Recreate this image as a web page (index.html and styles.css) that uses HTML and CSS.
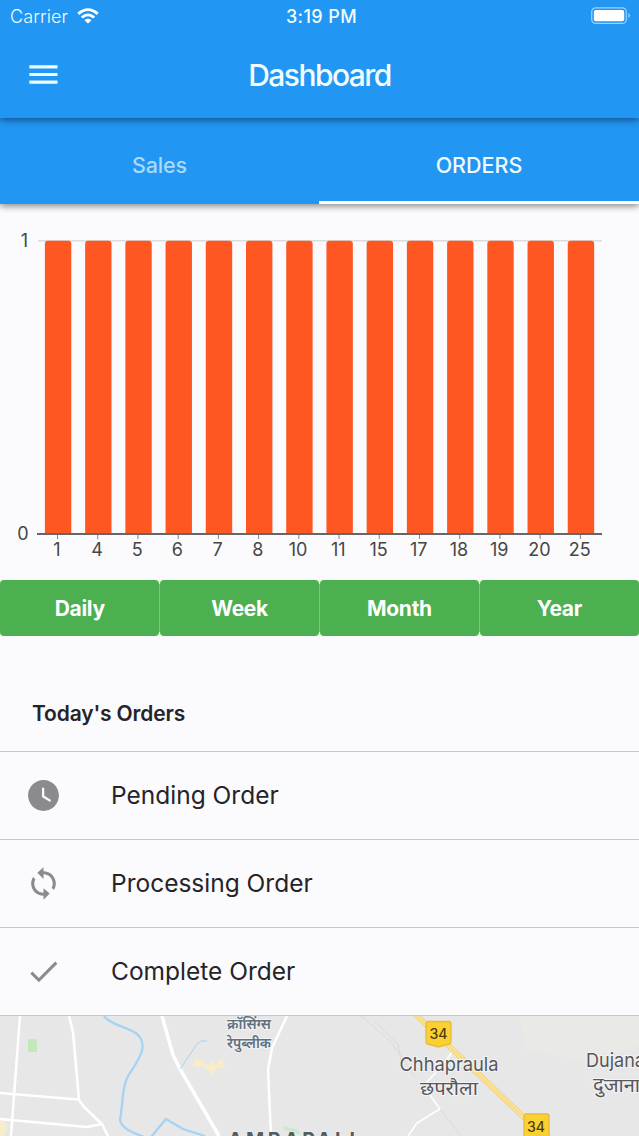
FILE: index.html
```html
<!DOCTYPE html>
<html lang="en">
<head>
<meta charset="utf-8">
<title>Dashboard</title>
<link rel="stylesheet" href="styles.css">
</head>
<body>
<main class="screen">
  <header class="header">
    <div class="status">
      <div class="carrier"><span class="carrier-name">Carrier</span>
        <svg class="wifi" width="22" height="16" viewBox="0 0 22 16" fill="#fff"><path d="M11 15.600 7.500 12.200Q11 9.300 14.500 12.200Z"/><path d="M5.900 10.600Q11 6.100 16.100 10.600L18.200 8.500Q11 2.300 3.800 8.500Z"/><path d="M2.300 7Q11-.8 19.700 7L21.800 4.800Q11-4.500.2 4.800Z"/></svg>
      </div>
      <span class="time">3:19 PM</span>
      <svg class="battery" width="40" height="18" viewBox="0 0 40 18"><rect x=".7" y=".8" width="34.6" height="15.6" rx="4" fill="none" stroke="#9bd0fb" stroke-width="1.2"/><rect x="2.8" y="2.9" width="30.4" height="11.4" rx="2" fill="#fff"/><path d="M37.3 5.8q3.6 2.8 0 5.6z" fill="#8ecafa"/></svg>
    </div>
    <div class="appbar">
      <svg class="menu" width="29" height="20" viewBox="0 0 29 20" fill="#effcff"><path d="M.3.3h28.2v3.1H.3zM.3 8h28.2v3.1H.3zM.3 15.6h28.2v3.1H.3z"/></svg>
      <h1 class="title">Dashboard</h1>
    </div>
  </header>
  <nav class="tabs">
    <div class="tab">Sales</div>
    <div class="tab tab-active">ORDERS</div>
  </nav>
  <svg class="chart" width="639" height="376" viewBox="0 204 639 376">
    <path d="M38 240.800H602" stroke="#dcdcdc" stroke-width="1.4"/>
    <g class="bars" id="bars"></g>
    <path d="M37 534H602" stroke="#666" stroke-width="1.8"/>
    <g class="axis" id="axis"><text x="24.5" y="247">1</text><text x="23" y="540">0</text></g>
  </svg>
  <div class="ranges">
    <button class="range">Daily</button><button class="range">Week</button><button class="range">Month</button><button class="range">Year</button>
  </div>
  <section class="orders">
    <h2 class="orders-title">Today's Orders</h2>
    <div class="order"><svg class="icon" width="37" height="37" viewBox="0 0 24 24"><path d="M12 2C6.500 2 2 6.500 2 12s4.500 10 10 10 10-4.500 10-10S17.500 2 12 2zm4.200 14.200L11 13V7h1.500v5.200l4.500 2.700z"/></svg><span class="order-name">Pending Order</span></div>
    <div class="order"><svg class="icon" width="37" height="37" viewBox="0 0 24 24"><path d="M12 4V1.500L8 5l4 4V6c3.310 0 6 2.690 6 6 0 1.010-.25 1.970-.7 2.800l1.460 1.460C19.540 15.030 20 13.570 20 12c0-4.420-3.580-8-8-8zm0 14c-3.310 0-6-2.690-6-6 0-1.010.25-1.970.7-2.800L5.240 7.740C4.460 8.970 4 10.430 4 12c0 4.420 3.580 8 8 8v2.500l4-4-4-3.500z"/></svg><span class="order-name">Processing Order</span></div>
    <div class="order"><svg class="icon" width="37" height="37" viewBox="0 0 24 24"><path d="M9 16.170 4.830 12l-1.420 1.410L9 19 21 7l-1.410-1.410z"/></svg><span class="order-name">Complete Order</span></div>
  </section>
  <svg class="map" width="639" height="120" viewBox="0 1016 639 120">
    <rect y="1016" width="639" height="120" fill="#e7e7e8"/>
    <path d="M520 1016H639V1045L590 1062 525 1050Z" fill="#e9e9e6"/>
    <path d="M28 1039h9v13h-9z" fill="#c3e8b9"/>
    <path d="M0 1121l5 0 2 8-3 7H0zM192 1065l4-7 7 3 4 4 8-5-2 7 9-8 3 10-8-2-4 8-5-5-6-4-5 2z" fill="#f8edc8"/>
    <path d="M283 1126l15 4 3 5-16-5z" fill="#cce6d0"/>
    <g fill="none" stroke="#fff" stroke-width="3" stroke-linejoin="round">
      <path d="M20 1016 11 1136" stroke-width="2.500"/><path d="M69 1016 73 1032 79 1100 84 1107 102 1124 108 1136M0 1093 78 1099.500M0 1119 87 1127 102 1124" stroke-width="2.600"/>
      <path d="M162 1016 173 1055 180 1069 219 1136" stroke-width="3.500"/>
      <path d="M287 1016 272 1048 268 1070 271 1136" stroke-width="2.500"/>
      <path d="M455 1048 443 1065 425 1084 432 1098 440 1109 417 1123 408 1136" stroke-width="1.600"/>
    </g>
    <g fill="none" stroke="#a4d3f5" stroke-width="2.300"><path d="M104 1016C110 1025 128 1027 137 1034 148 1044 141 1056 132 1070 121 1084 124 1098 120 1120 122 1129 132 1132 144 1137M151 1137 166 1119 183 1129 205 1136"/><path d="M180 1069 197 1044 201 1041 207 1041" stroke-width="1"/></g>
    <g fill="none" stroke="#d8dcdd" stroke-width="1"><path d="M361 1016 390 1041 401 1056 415 1077M375 1022 398 1044 401 1061M440 1109 461 1136"/></g>
    <path d="M413 1012 532 1125" fill="none" stroke="#edcf7b" stroke-width="5.500"/>
    <path d="M413 1012 532 1125" fill="none" stroke="#fbe596" stroke-width="4"/>
    <path d="M413 1012 532 1125" fill="none" stroke="#efd17d" stroke-width="1"/>
    <g class="shields"><path d="M428 1021.500h21q2 0 2 2v18q0 2-2 2.500l-10.500 3-10.500-3q-2-.5-2-2.500v-18q0-2 2-2zM526 1114h21q2 0 2 2v22h-25v-22q0-2 2-2z"/><text x="438.500" y="1039">34</text><text x="536" y="1131.500">34</text></g>
    <g class="places">
      <text class="hindi-small" x="227" y="1029" textLength="44" lengthAdjust="spacingAndGlyphs">क्रॉसिंग्स</text>
      <text class="hindi-small" x="227" y="1048" textLength="44" lengthAdjust="spacingAndGlyphs">रेपुब्लीक</text>
      <text x="399.500" y="1071" textLength="99" lengthAdjust="spacingAndGlyphs">Chhapraula</text>
      <text x="420" y="1095" textLength="58" lengthAdjust="spacingAndGlyphs">छपरौला</text>
      <text x="586" y="1067" textLength="59" lengthAdjust="spacingAndGlyphs">Dujana</text>
      <text x="593" y="1092" textLength="47" lengthAdjust="spacingAndGlyphs">दुजाना</text>
      <text class="district" x="228" y="1147" textLength="127" lengthAdjust="spacing">AMRAPALI</text>
    </g>
  </svg>
</main>
<script src="chart.js"></script>
</body>
</html>
```
FILE: chart.js
```js
const ns = 'http://www.w3.org/2000/svg';
const days = [1, 4, 5, 6, 7, 8, 10, 11, 15, 17, 18, 19, 20, 25];
const bars = document.getElementById('bars');
const axis = document.getElementById('axis');
function add(parent, tag, attrs, text) {
  const node = document.createElementNS(ns, tag);
  for (const key in attrs) node.setAttribute(key, attrs[key]);
  if (text !== undefined) node.textContent = text;
  parent.appendChild(node);
}
days.forEach((day, i) => {
  const x = 44.9 + i * 40.22;
  add(bars, 'path', { d: `M${x} 534V243.800q0-3 3-3h20.400q3 0 3 3V534z` });
  add(axis, 'path', { d: `M${x + 12.6} 535v4` });
  add(axis, 'text', { x: x + 11.9, y: 555.7 }, day);
});
```
FILE: styles.css
```css
* { box-sizing: border-box; }
body { margin: 0; background: #fbfafc; font-family: Inter, "Noto Sans", sans-serif; color: #252429; }
.screen { width: 639px; height: 1136px; overflow: hidden; display: flex; flex-direction: column; }
svg { display: block; flex: none; }
.header { height: 118px; flex: none; background: #2296f3; position: relative; z-index: 2; box-shadow: 0 2px 7px rgba(0, 20, 50, .55); color: #f2fcff; }
.status { height: 32px; padding: 0 8px 0 10px; display: grid; grid-template-columns: 1fr auto 1fr; align-items: center; font-size: 18px; }
.carrier { display: flex; align-items: center; gap: 9px; }
.carrier-name { font-weight: 350; letter-spacing: .1px; }
.wifi { overflow: visible; }
.time { font-weight: 500; letter-spacing: .4px; padding-left: 2px; }
.battery { justify-self: end; }
.appbar { display: grid; grid-template-columns: 1fr auto 1fr; align-items: center; height: 86px; padding: 0 29px; }
.title { margin: 0; font-size: 30px; font-weight: 500; letter-spacing: -1.55px; }
.tabs { height: 86px; flex: none; display: grid; grid-template-columns: 319px 320px; background: #2296f3; position: relative; z-index: 1; box-shadow: 0 2px 7px rgba(0, 0, 0, .48); }
.tab { display: flex; align-items: center; justify-content: center; padding-top: 8px; font-size: 21.5px; font-weight: 500; letter-spacing: -.1px; color: #a9dafa; }
.tab-active { color: #effbff; border-bottom: 3px solid #fff; padding-top: 11px; letter-spacing: 0; }
.bars { fill: #ff5722; }
.axis { font-size: 18px; text-anchor: middle; fill: #464646; stroke-width: 1; }
.axis path { stroke: #858585; }
.ranges { height: 56px; flex: none; display: grid; grid-template-columns: repeat(4, 1fr); gap: .5px; background: linear-gradient(transparent 4px, #7cc480 4px, #7cc480 52px, transparent 52px); }
.range { border: 0; border-radius: 4px; padding: 0; background: #4caf50; color: #fff; font: 700 21px Inter, sans-serif; letter-spacing: -.3px; }
.orders { padding-top: 60px; height: 380px; flex: none; }
.orders-title { margin: 0; padding: 0 32px; height: 55px; line-height: 36px; font-size: 21px; font-weight: 600; letter-spacing: -.15px; }
.order { height: 88px; display: flex; align-items: center; border-top: 1px solid #c9c9cc; padding-left: 25px; gap: 49px; }
.order:last-child { border-bottom: 1px solid #c9c9cc; height: 89px; }
.icon { fill: #8b8a8c; }
.order-name { font-size: 24.5px; letter-spacing: 0; padding-bottom: 2px; }
.shields path { fill: #fbd132; stroke: #e8ba38; stroke-width: 1.3; }
.shields text { font-size: 14px; font-weight: 500; text-anchor: middle; fill: #4b3c10; }
.places { font-family: Inter, "Noto Sans", "Noto Sans Devanagari", sans-serif; font-size: 19px; fill: #56565b; stroke: #f3f3f4; stroke-width: 2px; paint-order: stroke; }
.places .hindi-small { font-size: 14.5px; font-weight: 600; fill: #61707e; }
.places .district { font-size: 19.5px; font-weight: 700; fill: #525c60; stroke-width: 1px; }
```
